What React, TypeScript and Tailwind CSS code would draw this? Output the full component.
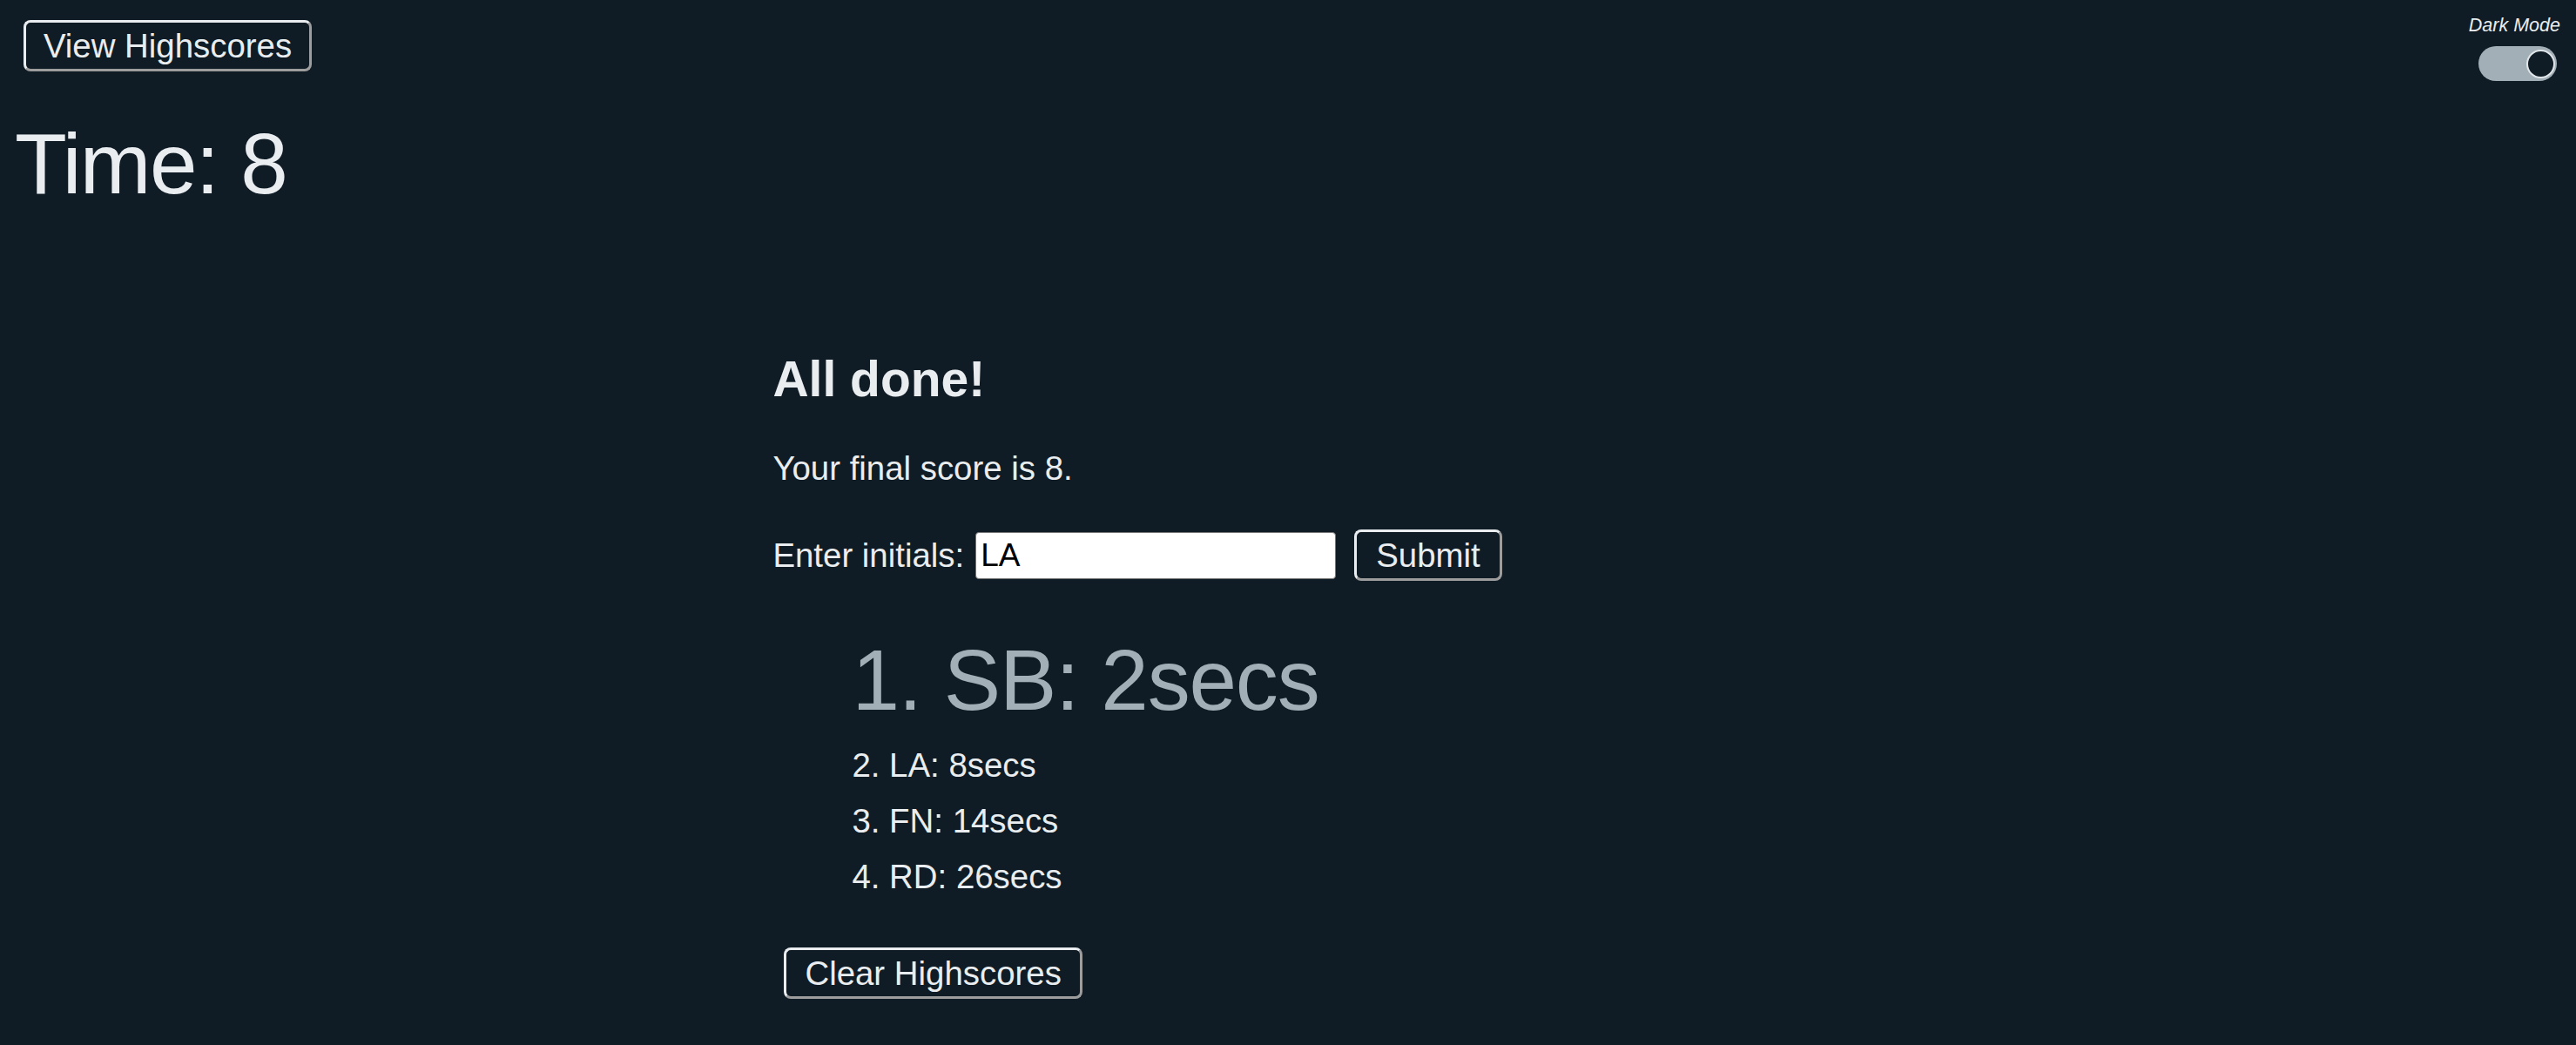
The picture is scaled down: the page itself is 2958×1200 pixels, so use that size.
import { useState } from 'react'

const SCORES = [
  { initials: 'SB', secs: 2 },
  { initials: 'LA', secs: 8 },
  { initials: 'FN', secs: 14 },
  { initials: 'RD', secs: 26 }
]

const btn =
  'rounded-[8px] border-[3px] border-t-[#e9edf0] border-l-[#e9edf0] border-r-[#9d9d9d] border-b-[#9d9d9d] bg-transparent py-[5px] text-[38.4px] leading-[43px] text-[#e9edf0]'

export default function App() {
  const [initials, setInitials] = useState('LA')
  const [dark, setDark] = useState(true)

  return (
    <div className="min-h-[1200px] w-full bg-[#101c25] font-['Liberation_Sans',Arial,sans-serif] text-[#e9edf0]">
      <header className="flex items-start justify-between">
        <div className="pl-[27px] pt-[23px]">
          <button className={`${btn} w-[331px] px-0`}>View Highscores</button>
        </div>

        <div className="flex flex-col items-end pr-[18px] pt-[19px]">
          <span className="text-[21.5px] italic leading-[21px]">Dark Mode</span>
          <button
            aria-label="Dark Mode"
            className="mr-[4px] mt-[13px] flex h-[40px] w-[90px] items-center rounded-full bg-[#a3afb6] px-[2px]"
            onClick={() => setDark(d => !d)}>
            <span
              className={`size-[33px] rounded-full border-2 border-[#dfe5e8] bg-[#101c25] ${
                dark ? 'ml-auto' : ''
              }`}
            />
          </button>
        </div>
      </header>

      <h1 className="ml-[17px] mt-[46px] text-[98px] font-normal leading-[98px] tracking-[-0.016em]">
        Time: 8
      </h1>

      <main className="mx-auto w-[40%]">
        <h2 className="mt-[170px] text-[57px] font-bold leading-[57px]">All done!</h2>
        <p className="mt-[55px] text-[38.4px] leading-[38px]">Your final score is 8.</p>

        <form
          className="mt-[51px] flex items-center text-[38.4px]"
          onSubmit={e => e.preventDefault()}>
          <label className="leading-[43px]" htmlFor="initials">
            Enter initials:
          </label>
          <input
            className="ml-[13px] h-[54px] w-[414px] rounded-[4px] border-[1.5px] border-[#767676] bg-white px-[5px] text-[37px] text-black outline-none"
            id="initials"
            onChange={e => setInitials(e.target.value)}
            value={initials}
          />
          <button className={`${btn} ml-[21px] px-[22px]`} type="submit">
            Submit
          </button>
        </form>

        <ol className="mt-[65px] list-none pl-[91px]">
          {SCORES.map((s, i) =>
            i === 0 ? (
              <li
                className="mb-[17px] text-[98px] leading-[98px] tracking-[-0.012em] text-[#a3afb6]"
                key={s.initials}>
                {i + 1}. {s.initials}: {s.secs}secs
              </li>
            ) : (
              <li className="text-[38.4px] leading-[64px]" key={s.initials}>
                {i + 1}. {s.initials}: {s.secs}secs
              </li>
            )
          )}
        </ol>

        <button className={`${btn} ml-[13px] mt-[49px] px-[21px]`}>Clear Highscores</button>
      </main>
    </div>
  )
}
